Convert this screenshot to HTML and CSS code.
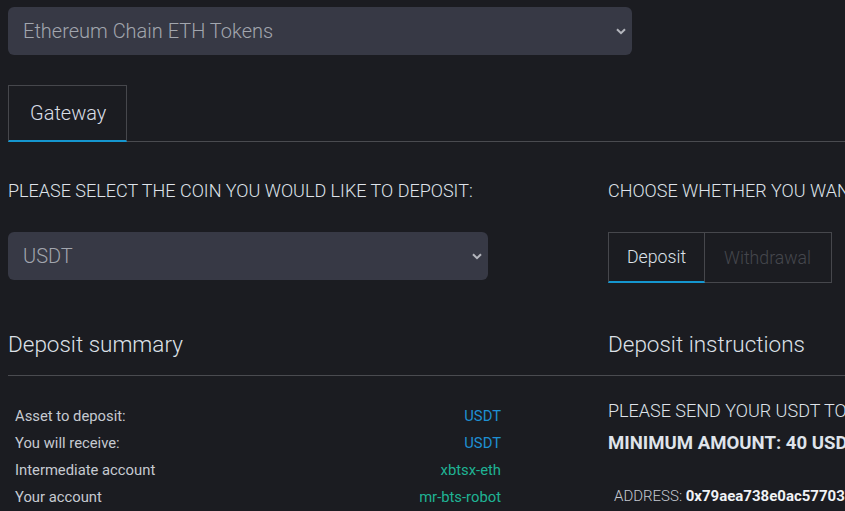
FILE: index.html
```html
<!DOCTYPE html>
<html>
<head>
<meta charset="utf-8">
<link rel="stylesheet" href="styles.css">
</head>
<body>
<div class="page">
  <div class="select select-wide">
    <span class="select-text">Ethereum Chain ETH Tokens</span>
    <svg class="chev" width="10" height="7" viewBox="0 0 10 7"><path d="M1 1.2 L5 5.2 L9 1.2" fill="none" stroke="#b4b6bd" stroke-width="2"/></svg>
  </div>

  <div class="tabs">
    <div class="tab active">Gateway</div>
  </div>

  <div class="grid">
    <div class="col col-left">
      <div class="label">PLEASE SELECT THE COIN YOU WOULD LIKE TO DEPOSIT:</div>
      <div class="select select-coin">
        <span class="select-text">USDT</span>
        <svg class="chev" width="10" height="7" viewBox="0 0 10 7"><path d="M1 1.2 L5 5.2 L9 1.2" fill="none" stroke="#b4b6bd" stroke-width="2"/></svg>
      </div>
      <h2 class="section-title">Deposit summary</h2>
      <table class="summary">
        <tr><td>Asset to deposit:</td><td class="val blue">USDT</td></tr>
        <tr><td>You will receive:</td><td class="val blue">USDT</td></tr>
        <tr><td>Intermediate account</td><td class="val green">xbtsx-eth</td></tr>
        <tr><td>Your account</td><td class="val green">mr-bts-robot</td></tr>
      </table>
    </div>
    <div class="col col-right">
      <div class="label">CHOOSE WHETHER YOU WANT TO DEPOSIT OR WITHDRAW:</div>
      <div class="seg">
        <div class="seg-item active">Deposit</div>
        <div class="seg-item">Withdrawal</div>
      </div>
      <h2 class="section-title">Deposit instructions</h2>
      <div class="instr">PLEASE SEND YOUR USDT TO THE ADDRESS BELOW</div>
      <div class="minimum">MINIMUM AMOUNT: 40 USDT</div>
      <div class="address"><span class="addr-label">ADDRESS:</span> <span class="addr-val">0x79aea738e0ac5770375a7b25a0b6dbd6f7e1b0c4</span></div>
    </div>
  </div>
</div>
</body>
</html>
```

FILE: styles.css
```css
html, body {
  margin: 0;
  padding: 0;
  overflow: hidden;
  background: #1b1c21;
}
body {
  font-family: Roboto, "Liberation Sans", sans-serif;
  color: #dde1e8;
}
.page {
  width: 1200px;
  padding: 7px 8px 0 8px;
}
.select {
  display: flex;
  align-items: center;
  justify-content: space-between;
  height: 48px;
  box-sizing: border-box;
  padding: 0 6px 0 15px;
  background: #373945;
  border-radius: 6px;
  font-size: 20px;
  font-weight: 300;
  color: #a2a6ae;
}
.select-wide { width: 624px; }
.select-coin { width: 480px; }
.chev { display: block; }

.tabs {
  display: flex;
  margin-top: 30px;
  border-bottom: 1px solid #4a4b50;
}
.tab {
  height: 57px;
  box-sizing: border-box;
  padding: 0 20px 0 21px;
  display: flex;
  align-items: center;
  font-size: 20px;
  font-weight: 300;
  color: #d9dee6;
  border: 1px solid #46474c;
  border-bottom: 2px solid #1596cf;
  margin-bottom: -1px;
}

.grid {
  display: grid;
  grid-template-columns: 600px 600px;
}
.label {
  margin-top: 38px;
  font-size: 18px;
  font-weight: 300;
  line-height: 21px;
  color: #dfe3ea;
  white-space: nowrap;
}
.select-coin { margin-top: 31px; }

.seg {
  display: flex;
  margin-top: 31px;
}
.seg-item {
  height: 51px;
  box-sizing: border-box;
  padding: 0 18px;
  display: flex;
  align-items: center;
  font-size: 17.7px;
  font-weight: 300;
  color: #45474d;
  border: 1px solid #46474c;
}
.seg-item + .seg-item {
  border-left: none;
  padding: 0 20px 0 19px;
}
.seg-item.active {
  color: #dde2ea;
  border-bottom: 2px solid #1596cf;
}

.section-title {
  margin: 0;
  font-size: 22.5px;
  font-weight: 300;
  line-height: 28px;
  color: #dde1e8;
  padding-bottom: 17px;
  border-bottom: 1px solid #4a4b50;
}
.col-left .section-title { margin-top: 50px; }
.col-right .section-title { margin-top: 47px; }

.summary {
  width: 500px;
  border-collapse: collapse;
  margin-top: 26px;
  font-size: 14.8px;
  color: #c6cad1;
}
.summary td {
  height: 27px;
  padding: 0 7px;
}
.summary .val { text-align: right; }
.blue { color: #1e90d3; }
.green { color: #1fb394; }

.instr {
  margin-top: 24px;
  font-size: 18px;
  font-weight: 300;
  line-height: 21px;
  color: #dfe3ea;
  white-space: nowrap;
}
.minimum {
  margin-top: 12px;
  font-size: 18.6px;
  font-weight: 700;
  line-height: 21px;
  color: #dfe3ea;
  white-space: nowrap;
}
.address {
  margin-top: 33px;
  padding-left: 6px;
  font-size: 15px;
  line-height: 18px;
  white-space: nowrap;
}
.addr-label { font-weight: 300; color: #c6cad1; }
.addr-val { font-weight: 700; color: #f0f2f5; }
```
